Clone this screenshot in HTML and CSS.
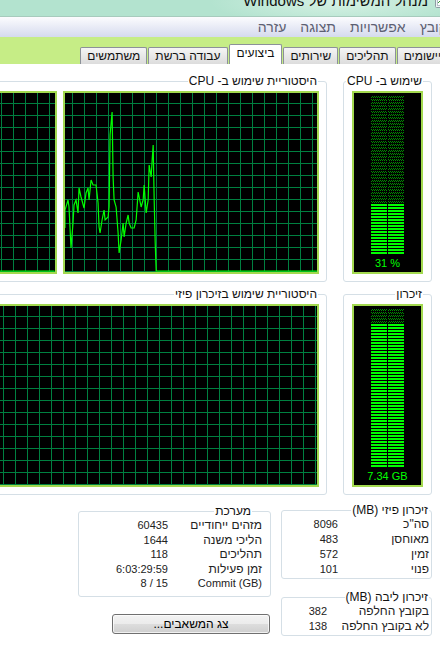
FILE: index.html
```html
<!DOCTYPE html>
<html lang="he" dir="rtl">
<head>
<meta charset="UTF-8">
<title>מנהל המשימות של Windows</title>
<link rel="stylesheet" href="styles.css">
</head>
<body>
<div class="window">
  <div class="titlebar">
    <svg class="appicon" width="16" height="16" viewBox="0 0 16 16">
      <rect x="0.5" y="0.5" width="15" height="15" rx="1" fill="#eef3f5" stroke="#8f9ca4"/>
      <rect x="2.5" y="3.5" width="11" height="10" fill="#ffffff" stroke="#b7c3ca"/>
      <polyline points="3,11 6,8 8,10 11,5 13,7" fill="none" stroke="#3c9a3c"/>
    </svg>
    <span class="caption">מנהל המשימות של Windows</span>
  </div>

  <ul class="menubar">
    <li>קובץ</li>
    <li>אפשרויות</li>
    <li>תצוגה</li>
    <li>עזרה</li>
  </ul>

  <ul class="tabs">
    <li class="tab">יישומים</li>
    <li class="tab">תהליכים</li>
    <li class="tab">שירותים</li>
    <li class="tab active">ביצועים</li>
    <li class="tab">עבודה ברשת</li>
    <li class="tab">משתמשים</li>
  </ul>

  <div class="panel">
    <!-- CPU -->
    <div class="row">
      <fieldset class="group meter-group">
        <legend>שימוש ב- CPU</legend>
        <div class="screen meter">
          <div class="bars">
            <div class="bar"><div class="lit" style="height:50px"></div></div>
            <div class="bar"><div class="lit" style="height:50px"></div></div>
          </div>
          <div class="readout">31 %</div>
        </div>
      </fieldset>
      <fieldset class="group history-group">
        <legend>היסטוריית שימוש ב- CPU</legend>
        <div class="history">
          <div class="screen chart">
            <svg viewBox="0 0 252 179" preserveAspectRatio="none">
              <polyline points="0,135 0,117 3,107 4,114 6,155 8,130 9,112 11,107 13,120 14,95 16,104 19,115 21,100 23,95 24,107 26,87 28,92 31,92 33,110 34,134 35,140 37,127 39,117 40,127 43,124 44,114 45,42 47,19 48,84 49,107 51,114 53,140 54,160 56,147 58,130 59,144 61,130 63,122 64,130 66,135 69,135 71,127 73,99 74,104 76,114 78,107 79,92 81,120 83,107 84,72 86,84 87,67 88,52 89,107 90,149 91,178 252,178"/>
            </svg>
          </div>
          <div class="screen chart">
            <svg viewBox="0 0 252 179" preserveAspectRatio="none">
              <polyline points="0,178 252,178"/>
            </svg>
          </div>
        </div>
      </fieldset>
    </div>

    <!-- memory -->
    <div class="row mem-row">
      <fieldset class="group meter-group">
        <legend>זיכרון</legend>
        <div class="screen meter">
          <div class="bars">
            <div class="bar"><div class="lit" style="height:143px"></div></div>
            <div class="bar"><div class="lit" style="height:143px"></div></div>
          </div>
          <div class="readout">7.34 GB</div>
        </div>
      </fieldset>
      <fieldset class="group history-group">
        <legend>היסטוריית שימוש בזיכרון פיזי</legend>
        <div class="history">
          <div class="screen chart mem-chart"></div>
        </div>
      </fieldset>
    </div>

    <!-- totals -->
    <div class="bottom">
      <div class="mem-col">
        <fieldset class="group stats phys">
          <legend>זיכרון פיזי (MB)</legend>
          <div class="rows">
            <span>סה&quot;כ</span><span class="val">8096</span>
            <span>מאוחסן</span><span class="val">483</span>
            <span>זמין</span><span class="val">572</span>
            <span>פנוי</span><span class="val">101</span>
          </div>
        </fieldset>
        <fieldset class="group stats kernel">
          <legend>זיכרון ליבה (MB)</legend>
          <div class="rows">
            <span>בקובץ החלפה</span><span class="val">382</span>
            <span>לא בקובץ החלפה</span><span class="val">138</span>
          </div>
        </fieldset>
      </div>
      <div class="sys-col">
        <fieldset class="group stats system">
          <legend>מערכת</legend>
          <div class="rows">
            <span>מזהים ייחודיים</span><span class="val">60435</span>
            <span>הליכי משנה</span><span class="val">1644</span>
            <span>תהליכים</span><span class="val">118</span>
            <span>זמן פעילות</span><span class="val">6:03:29:59</span>
            <span><bdi>Commit (GB)</bdi></span><span class="val">8 / 15</span>
          </div>
        </fieldset>
        <button class="monitor">צג המשאבים...</button>
      </div>
    </div>
  </div>
</div>
</body>
</html>
```

FILE: styles.css
```css
html,
body {
  margin: 0;
  padding: 0;
  height: 100%;
  overflow: hidden;
  background: #fff;
  font-family: "Liberation Sans", "DejaVu Sans", sans-serif;
  font-size: 12px;
  color: #222;
}

/* window is wider than the view, right edge sits past it */
.window {
  width: 680px;
  height: 100%;
  margin-right: -20px;
}

/* caption */
.titlebar {
  height: 16px;
  display: flex;
  overflow: hidden;
  border-bottom: 1px solid #a7cbbd;
  background: radial-gradient(130px 24px at 560px 2px, #d6f1e4, rgba(214, 241, 228, 0)), #b3e3cf;
}
.appicon {
  flex: none;
  margin: -8px 9px 0 7px;
}
.caption {
  margin-top: -7px;
  font-size: 15px;
  line-height: 16px;
  color: #111;
  white-space: nowrap;
}

/* menu */
.menubar {
  list-style: none;
  margin: 0;
  padding: 0 6px;
  height: 20px;
  display: flex;
  align-items: center;
  background: linear-gradient(#fcfcfe, #d5daee);
  color: #5d6072;
  font-size: 14px;
}
.menubar li {
  padding: 0 7px;
}

/* tabs */
.tabs {
  list-style: none;
  margin: 0;
  padding: 0 12px;
  height: 27px;
  display: flex;
  align-items: flex-end;
  background: #c6ed86;
  font-size: 12px;
}
.tab {
  height: 16px;
  line-height: 16px;
  padding: 0 6px;
  margin-left: 1px;
  border: 1px solid #8c9199;
  border-bottom: 0;
  border-radius: 2px 2px 0 0;
  background: linear-gradient(#f5f5f5, #dcdcdc);
  color: #111;
  white-space: nowrap;
}
.tab.active {
  height: 19px;
  line-height: 17px;
  padding: 0 7px;
  background: #fff;
}

/* performance page */
.panel {
  padding: 10px 28px 0 11px;
}
.row {
  display: flex;
  gap: 16px;
}
.mem-row {
  margin-top: 5px;
}

.group {
  margin: 0;
  min-width: 0;
  box-sizing: border-box;
  border: 1px solid #d5dfe6;
  border-radius: 3px;
}
.group legend {
  padding: 0 1px;
  font-size: 12px;
  line-height: 14px;
  color: #111;
  white-space: nowrap;
}

.meter-group {
  width: 89px;
  flex: none;
  padding: 3px 8px 7px;
}
.history-group {
  flex: 1;
  padding: 3px 7px 7px 8px;
}
.history-group legend {
  margin-right: 1px;
}
.history {
  display: flex;
  gap: 6px;
}

.screen {
  height: 183px;
  box-sizing: border-box;
  border: 2px solid #a3d94f;
  background-color: #000;
}
.chart {
  flex: 1;
  background-image: linear-gradient(to right, #008040 1px, transparent 1px),
    linear-gradient(#008040 1px, transparent 1px);
  background-size: 12px 12px;
  background-position: 7px 10px;
}
.mem-chart {
  background-position: 9px 10px;
}
.chart svg {
  display: block;
  width: 100%;
  height: 100%;
}
.chart polyline {
  fill: none;
  stroke: #00ff00;
  stroke-width: 1.2;
}

/* usage bars */
.meter {
  display: flex;
  flex-direction: column;
  align-items: center;
  padding-top: 3px;
}
.bars {
  display: flex;
  gap: 1px;
  height: 158px;
}
.bar {
  width: 16px;
  display: flex;
  flex-direction: column;
  justify-content: flex-end;
  background: repeating-linear-gradient(transparent 0 2px, #000 2px 3px),
    conic-gradient(#008a00 0 25%, #000 0 50%, #008a00 0 75%, #000 0) 0 0 / 2px 2px;
}
.lit {
  background: repeating-linear-gradient(#00ff00 0 2px, #000 2px 3px);
}
.readout {
  direction: ltr;
  margin-top: 2px;
  font-size: 11px;
  line-height: 14px;
  color: #00ff00;
}

/* totals */
.bottom {
  display: flex;
  gap: 10px;
  margin-top: 8px;
  align-items: flex-start;
}
.mem-col {
  width: 151px;
  flex: none;
}
.sys-col {
  width: 193px;
  flex: none;
  padding-top: 1px;
}
.stats {
  padding: 0 2px 1px;
}
.rows {
  display: grid;
  line-height: 15px;
}
.rows bdi {
  font-size: 11px;
}
.val {
  direction: ltr;
  text-align: right;
  font-size: 11px;
}
.phys .rows {
  grid-template-columns: 91px 1fr;
}
.kernel {
  margin-top: 11px;
}
.kernel .rows {
  grid-template-columns: 102px 1fr;
}
.system {
  padding: 0 8px 5px;
}
.system legend {
  margin-right: 10px;
}
.system .rows {
  grid-template-columns: 94px 1fr;
  line-height: 14.6px;
}

.monitor {
  display: block;
  width: 158px;
  height: 20px;
  margin: 17px 1px 0 0;
  padding: 0;
  border: 1px solid #707070;
  border-radius: 3px;
  background: linear-gradient(#f3f3f3, #ebebeb 50%, #dddddd 50%, #cfcfcf);
  box-shadow: inset 0 0 0 1px rgba(255, 255, 255, 0.7);
  font-family: "Liberation Sans", "DejaVu Sans", sans-serif;
  font-size: 12px;
  color: #000;
}
```
